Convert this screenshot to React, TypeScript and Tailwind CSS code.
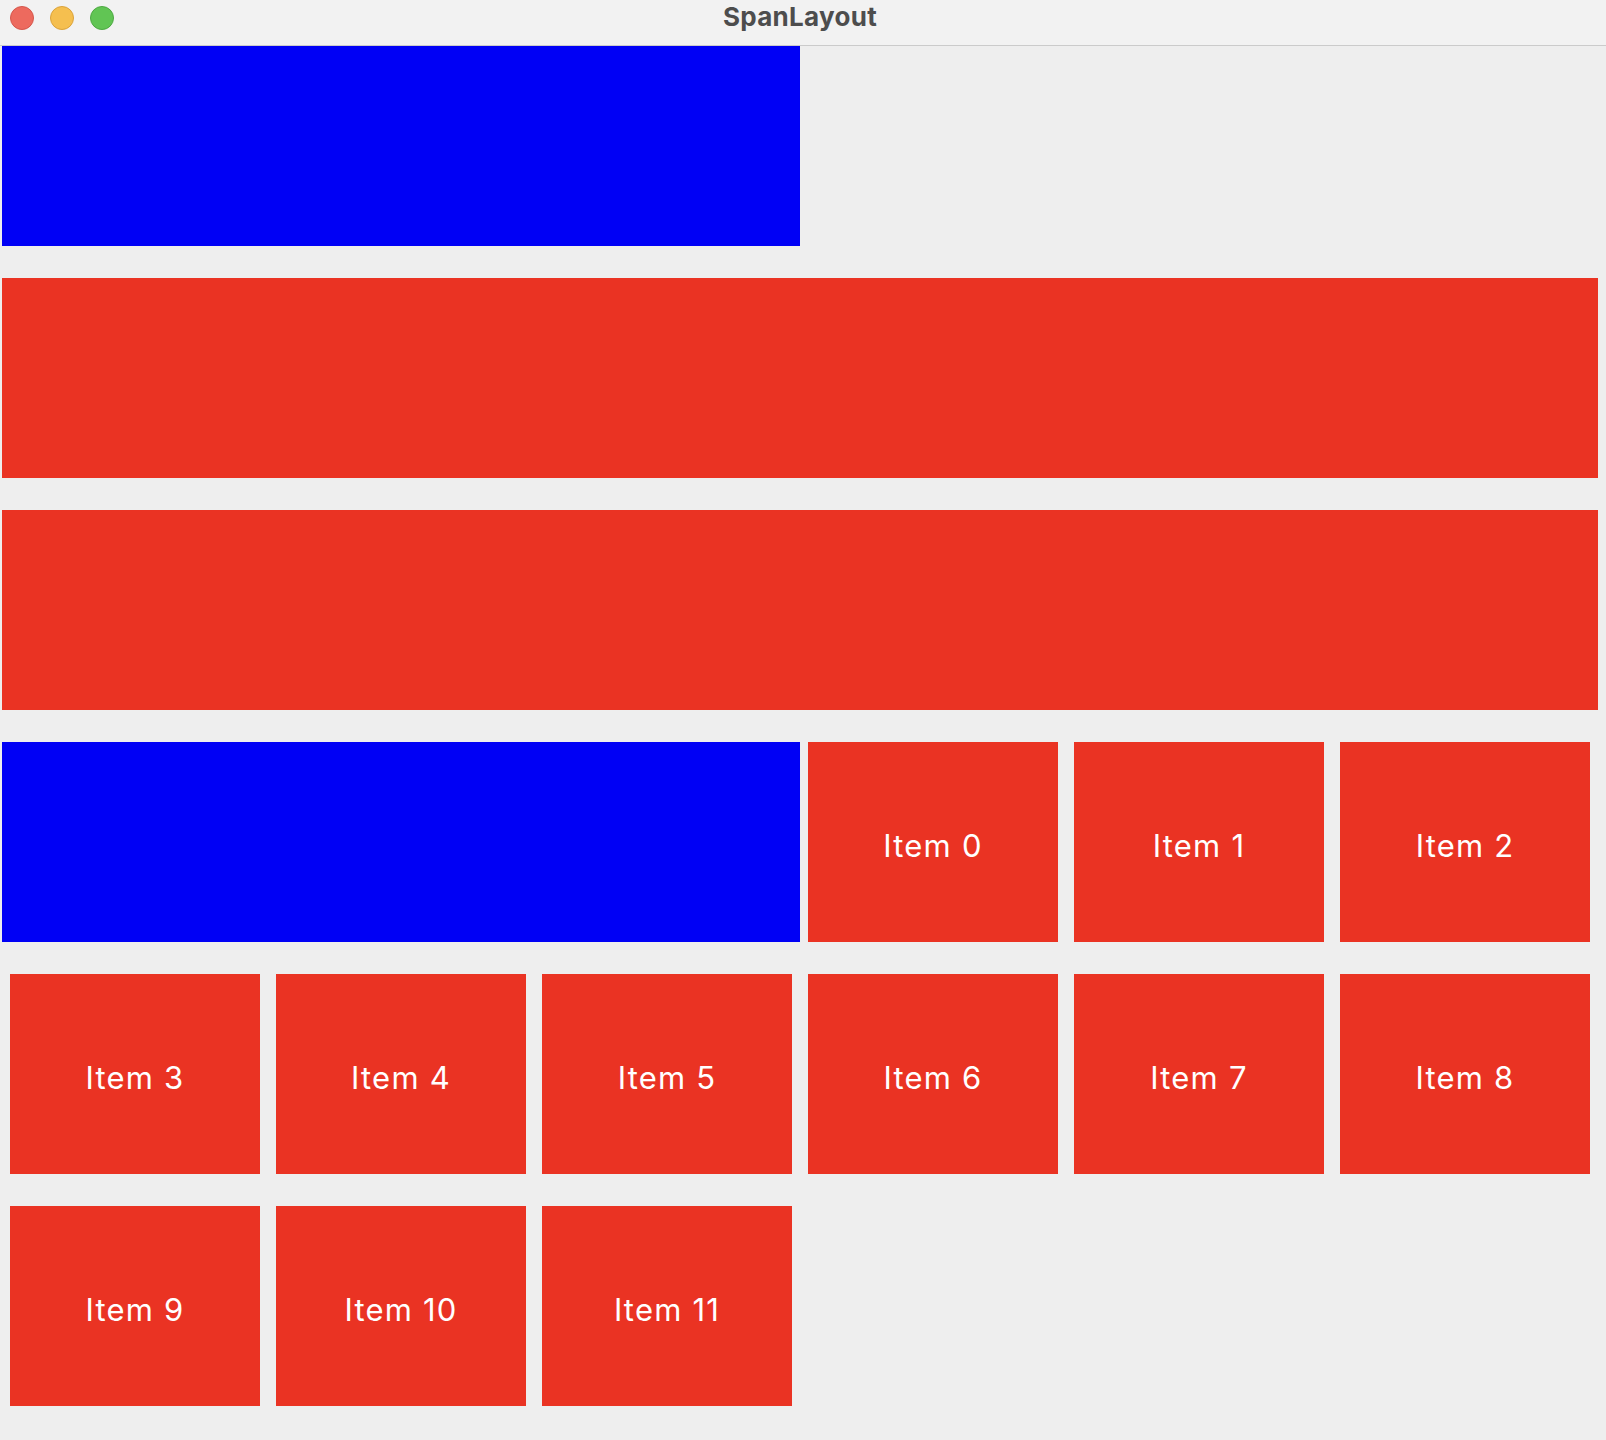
export default function App() {
    const row2 = [3, 4, 5, 6, 7, 8];
    const row3 = [9, 10, 11];

    const Item = ({ n }: { n: number }) => (
        <div className="w-[250px] h-[200px] bg-[#ea3323] flex items-center justify-center pt-[8px]">
            <span className="text-white text-[31px] font-['Inter',sans-serif] tracking-[1.2px]">Item {n}</span>
        </div>
    );

    return (
        <div className="w-[1606px] h-[1440px] bg-[#eeeeee] overflow-hidden">
            {/* Title bar */}
            <div className="relative h-[46px] bg-[#f2f2f2] border-b border-[#cbcbcb] flex items-center justify-center pr-[6px]">
                <div className="absolute left-[10px] top-[6px] flex gap-[16px]">
                    <span className="w-[24px] h-[24px] rounded-full bg-[#ed6a5e] border border-[#d5574c]" />
                    <span className="w-[24px] h-[24px] rounded-full bg-[#f5bf4f] border border-[#dba33b]" />
                    <span className="w-[24px] h-[24px] rounded-full bg-[#61c554] border border-[#4ea943]" />
                </div>
                <span className="text-[26px] font-bold text-[#4d4d4d] font-['Inter',sans-serif] -mt-[12px] tracking-[0.3px]">SpanLayout</span>
            </div>

            {/* Rows */}
            <div className="flex flex-col gap-[32px]">
                <div className="pl-[2px]">
                    <div className="w-[798px] h-[200px] bg-[#0000f5]" />
                </div>
                <div className="pl-[2px]">
                    <div className="w-[1596px] h-[200px] bg-[#ea3323]" />
                </div>
                <div className="pl-[2px]">
                    <div className="w-[1596px] h-[200px] bg-[#ea3323]" />
                </div>
                <div className="pl-[2px] flex">
                    <div className="w-[798px] h-[200px] bg-[#0000f5] mr-[8px]" />
                    <div className="flex gap-[16px]">
                        {[0, 1, 2].map(n => <Item key={n} n={n} />)}
                    </div>
                </div>
                <div className="pl-[10px] flex gap-[16px]">
                    {row2.map(n => <Item key={n} n={n} />)}
                </div>
                <div className="pl-[10px] flex gap-[16px]">
                    {row3.map(n => <Item key={n} n={n} />)}
                </div>
            </div>
        </div>
    );
}
